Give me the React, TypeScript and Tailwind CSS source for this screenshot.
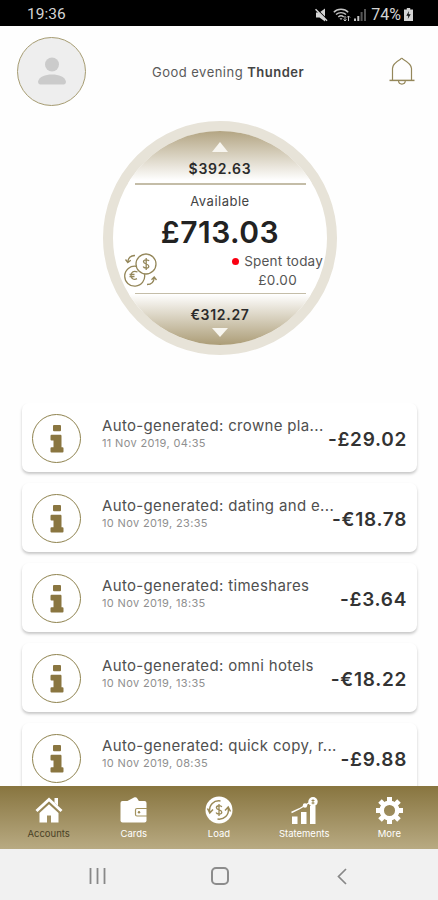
import type { ReactNode } from 'react';

interface Transaction {
  id: number;
  title: string;
  date: string;
  amount: string;
}

const transactions: Transaction[] = [
  { id: 1, title: 'Auto-generated: crowne pla...', date: '11 Nov 2019, 04:35', amount: '-£29.02' },
  { id: 2, title: 'Auto-generated: dating and e...', date: '10 Nov 2019, 23:35', amount: '-€18.78' },
  { id: 3, title: 'Auto-generated: timeshares', date: '10 Nov 2019, 18:35', amount: '-£3.64' },
  { id: 4, title: 'Auto-generated: omni hotels', date: '10 Nov 2019, 13:35', amount: '-€18.22' },
  { id: 5, title: 'Auto-generated: quick copy, r...', date: '10 Nov 2019, 08:35', amount: '-£9.88' },
];

function StatusBar() {
  return (
    <div className="flex h-[26px] shrink-0 items-center justify-between bg-black pl-[27px] pr-[25px] pt-[3px] font-['Roboto',sans-serif] text-[15.5px] text-[#d4d4d4]">
      <span>19:36</span>
      <div className="flex items-center">
        {/* Muted speaker */}
        <svg width="13" height="14" viewBox="0 0 13 14" fill="none" className="mr-[5px]">
          <path d="M1 4.500h3.500L10 .5v13L4.500 9.500H1z" fill="#d4d4d4" />
          <path d="M1.500 .8 13 12.300" stroke="#000" strokeWidth="1.2" />
          <path d="M.5 1.200 12 12.700" stroke="#d4d4d4" strokeWidth="1.600" />
        </svg>
        {/* Wifi */}
        <svg width="18" height="14" viewBox="0 0 18 14" fill="none" stroke="#c4c4c4" strokeWidth="1.4" className="mr-[3px]">
          <path d="M.8 4.200C4.500.2 11.500.2 15.200 4.200" />
          <path d="M3 6.600c2.700-2.600 7.300-2.600 10 0" />
          <path d="M5.300 9c1.500-1.400 3.900-1.400 5.400 0" />
          <path d="M6.500 10.200h3L8 12z" fill="#c4c4c4" stroke="none" />
          <path d="M12 8v5m-1.500-1.500L12 13l1.500-1.500M15.500 13V8M14 9.500 15.500 8 17 9.500" strokeWidth="1" />
        </svg>
        {/* Signal strength */}
        <svg width="12" height="13" viewBox="0 0 12 13" className="mr-[5px]">
          <path d="M0 10.500h2V13H0zM3.300 8h2v5h-2z" fill="#c4c4c4" />
          <path d="M6.600 4h2v9h-2zM10 1h2v12h-2z" fill="#555" />
        </svg>
        <span className="text-[16px]">74%</span>
        <svg width="9" height="13" viewBox="0 0 9 13" className="ml-[3px]">
          <path d="M2.800 0h3.400v1.500H9V13H0V1.500h2.800z" fill="#d4d4d4" />
          <path d="M5 3 2.300 7.700h2L3.800 11l2.900-4.800H4.600z" fill="#111" />
        </svg>
      </div>
    </div>
  );
}

function Header() {
  return (
    <header className="flex h-[90px] shrink-0 items-center pl-[17px]">
      <div className="flex size-[69px] items-center justify-center rounded-full border-[1.5px] border-[#a69c72] bg-[#eeeeee]">
        <svg width="28" height="28" viewBox="0 0 28 28" fill="#cbcbcb">
          <circle cx="14" cy="7.500" r="7" />
          <path d="M0 24.500C1.500 19.500 7 17.500 14 17.500s12.500 2 14 7c0 1.800-1 3-2.500 3h-23C1 27.500 0 26.300 0 24.500z" />
        </svg>
      </div>
      <p className="ml-[66px] w-[237px] pt-[3px] text-[13px] tracking-[0.48px] whitespace-nowrap text-[#5a5a5a]">
        Good evening <span className="font-semibold text-[#444]">Thunder</span>
      </p>
      <svg width="26" height="29" viewBox="0 0 26 29" fill="none" stroke="#94875a" strokeWidth="1.200">
        <path d="M3.500 23V11.500c0-3.500 2.500-6 8-9.200.7-1.400 1.800-1.400 2.500 0 5.500 3.200 8.500 5.700 8.500 9.200V23" />
        <path d="M.5 23.400h25" strokeWidth="1.500" />
        <path d="M9.500 23.800c.3 4.400 6.500 4.400 6.800 0" />
      </svg>
    </header>
  );
}

function ExchangeIcon() {
  return (
    <svg width="34" height="34" viewBox="0 0 34 34" fill="none" stroke="#94875a" strokeWidth="1.300">
      <circle cx="22" cy="11" r="10" />
      <path d="M12.200 13.300A10 10 0 1 0 20.500 21.200" />
      <path d="M25 8c-.5-1.500-5.500-2-5.500.8 0 2.700 5.300 1.700 5.300 4.500 0 2.600-5 2.200-5.600.2M22.200 5v12" />
      <path d="M13.500 19c-4.500-2-6.500 1-6.500 3.500s2.500 5 6 3.200M5.500 21.500h5M5.500 23.700h5" />
      <path d="M11 2.500C6.500 2.500 4 5 3.800 9.500M1.500 6.500l2.300 3 3-2.300" />
      <path d="M23 31.500c4.500 0 7-2.500 7.200-7M27.500 26.800l2.700-2.800 2.300 3" />
    </svg>
  );
}

function BalanceDial() {
  return (
    <section className="mt-[5px] ml-[103px] flex size-[234px] shrink-0 flex-col items-center overflow-hidden rounded-full border-[10px] border-[#e7e3d8] bg-white text-[#2b2b2b]">
      <div className="flex h-[52px] w-full flex-col items-center bg-linear-to-b from-[#b3a583] to-white to-95%">
        <svg width="16" height="10" viewBox="0 0 16 10" className="mt-[11px]">
          <path d="M8 0l8 10H0z" fill="#f7f5ef" />
        </svg>
        <span className="mt-[8px] text-[14px] leading-[17px] font-semibold tracking-[0.75px]">$392.63</span>
      </div>
      <div className="h-[1.500px] w-[171px] shrink-0 bg-[#c4bda8]" />
      <div className="mt-[7px] text-[13px] leading-[18px] tracking-[0.5px] text-[#444]">Available</div>
      <div className="mt-[4px] text-[30px] leading-[36px] font-semibold tracking-[0.5px] text-[#222]">£713.03</div>
      <div className="mt-[2px] flex h-[40px] w-full items-start justify-between pl-[11px] pr-[4px]">
        <div className="pt-px">
          <ExchangeIcon />
        </div>
        <div className="text-[13.5px] leading-[19.500px] tracking-[0.200px] whitespace-nowrap text-[#555]">
          <div className="flex items-center gap-[5px]">
            <span className="size-[7px] rounded-full bg-[#fa0012]" />
            Spent today
          </div>
          <div className="pl-[26px] tracking-[0.400px]">£0.00</div>
        </div>
      </div>
      <div className="mt-px h-[1.500px] w-[171px] shrink-0 bg-[#c4bda8]" />
      <div className="flex w-full flex-1 flex-col items-center bg-linear-to-b from-white to-[#ac9d77]">
        <span className="mt-[12px] text-[14px] leading-[18px] font-semibold tracking-[0.700px]">€312.27</span>
        <svg width="16" height="9" viewBox="0 0 16 9" className="mt-[4px]">
          <path d="M0 0h16L8 9z" fill="#f7f5ef" />
        </svg>
      </div>
    </section>
  );
}

function TransactionCard({ title, date, amount }: Transaction) {
  return (
    <div className="flex h-[69px] shrink-0 rounded-[7px] bg-white pl-[10px] pr-[10px] shadow-[0_2px_3px_rgba(0,0,0,0.22)]">
      <div className="mt-[11px] flex size-[49px] shrink-0 items-center justify-center rounded-full border border-[#8f834f]">
        <svg width="14" height="28" viewBox="0 0 14 27" preserveAspectRatio="none" fill="#8a7640">
          <rect x="3" y="0" width="8" height="6" rx="1" />
          <path d="M1.500 9.500H10.500q1 0 1 1V21.500h1q1 0 1 1V25.500q0 1-1 1H1.500q-1 0-1-1V22.500q0-1 1-1H3.500V15H1.500q-1 0-1-1V10.500q0-1 1-1z" />
        </svg>
      </div>
      <div className="ml-[21px] flex-1 pt-[13px]">
        <div className="w-0 text-[15px] leading-[20px] tracking-[0.340px] whitespace-nowrap text-[#505050]">{title}</div>
        <div className="text-[11px] leading-[15px] tracking-[0.350px] whitespace-nowrap text-[#8f8f8f]">{date}</div>
      </div>
      <div className="pt-[24px] text-[19px] leading-[26px] font-semibold tracking-[0.700px] text-[#333]">{amount}</div>
    </div>
  );
}

function TabItem({ label, active, children }: { label: string; active?: boolean; children: ReactNode }) {
  return (
    <div className="flex flex-1 flex-col items-center pt-[9px]">
      <div className="flex h-[30px] items-center">{children}</div>
      <span className={`mt-[2px] text-[9.500px] leading-[14px] ${active ? 'text-[#4a4226]' : 'text-white'}`}>{label}</span>
    </div>
  );
}

function TabBar() {
  return (
    <nav className="flex h-[63px] shrink-0 bg-linear-to-b from-[#88753f] to-[#b8aa82] px-[6px]">
      <TabItem label="Accounts" active>
        <svg width="28" height="26" viewBox="0 0 28 26" fill="#fff">
          <path d="M1.500 14 14 2.500 26.500 14" fill="none" stroke="#fff" strokeWidth="3" />
          <path d="M19.500 1h3.500v8l-3.500-3.500z" />
          <path d="M4.500 16 14 7.300l9.500 8.700v9.500H16V18.500h-4v7H4.500z" />
        </svg>
      </TabItem>
      <TabItem label="Cards">
        <svg width="27" height="26" viewBox="0 0 27 26" fill="#fff">
          <path d="M5.500 5 14 .5c1.500-.7 2.500-.3 3.300 1L19.500 5z" />
          <path d="M2.500 4h22q2 0 2 2v17.500q0 2-2 2h-22q-2 0-2-2V6q0-2 2-2z" />
          <path d="M27 11.500H17q-1.500 0-1.500 1.500v4.500q0 1.500 1.500 1.500h10" fill="none" stroke="#a4945f" strokeWidth="1.200" />
          <circle cx="19" cy="15.300" r="1.200" fill="#9a8956" />
        </svg>
      </TabItem>
      <TabItem label="Load">
        <svg width="28" height="28" viewBox="0 0 28 28" fill="none" stroke="#9a8956" strokeWidth="1.500">
          <circle cx="14" cy="14" r="13.500" fill="#fff" stroke="none" />
          <path d="M4.800 16C3.500 9 9 4 15.500 5M2.500 12.500 4.800 17l3.200-3.500M23.200 12c1.300 7-4.200 12-10.700 11M25.500 15.500 23.200 11 20 14.500" />
          <path d="M16.800 11c-.8-1.800-5.400-1.800-5.400.7 0 2.600 5.400 1.800 5.400 4.500 0 2.500-5 2.300-5.700.3M14 8v12" strokeWidth="1.300" />
        </svg>
      </TabItem>
      <TabItem label="Statements">
        <svg width="27" height="27" viewBox="0 0 27 27" fill="#fff">
          <path d="M1 19.500h5.500V27H1zM10 15h5.500v12H10zM19 9h5.500v18H19z" />
          <path d="M.5 15.500 8 12l6-3.500 6-4" fill="none" stroke="#fff" strokeWidth="1.400" />
          <circle cx="14" cy="8.500" r="2.200" />
          <circle cx="22" cy="4.800" r="4.700" />
          <path d="M22 2.300v5M20.500 3.500h3M20.500 6h3" stroke="#9a8956" strokeWidth="1" />
        </svg>
      </TabItem>
      <TabItem label="More">
        <svg width="27" height="27" viewBox="0 0 27 27" fill="none" stroke="#fff">
          <circle cx="13.500" cy="13.500" r="7.800" strokeWidth="4.500" />
          <g strokeWidth="5">
            <path d="M13.500 0v5M13.500 22v5M0 13.500h5M22 13.500h5" />
            <path d="m4 4 3.500 3.500M19.500 19.500 23 23M4 23l3.500-3.500M19.500 7.500 23 4" />
          </g>
        </svg>
      </TabItem>
    </nav>
  );
}

function SystemNav() {
  return (
    <div className="flex h-[51px] shrink-0 items-center bg-[#f1f1f1] pt-[3px] pl-[89px]">
      <svg width="17" height="16" viewBox="0 0 17 16" stroke="#888" strokeWidth="1.800">
        <path d="M1.500 0v16M8.500 0v16M15.500 0v16" />
      </svg>
      <div className="ml-[105px] size-[18px] rounded-[5px] border-2 border-[#8c8c8c]" />
      <svg width="10" height="17" viewBox="0 0 10 17" fill="none" stroke="#888" strokeWidth="1.700" className="ml-[108px]">
        <path d="M9 1 1.500 8.500 9 16" />
      </svg>
    </div>
  );
}

export default function App() {
  return (
    <div className="flex h-[900px] w-[438px] flex-col overflow-hidden bg-[#fefefe] font-['Inter',sans-serif]">
      <StatusBar />
      <Header />
      <BalanceDial />
      <main className="mt-[48px] flex min-h-0 flex-1 flex-col gap-[11px] overflow-hidden pl-[22px] pr-[21px]">
        {transactions.map((item) => (
          <TransactionCard key={item.id} {...item} />
        ))}
      </main>
      <TabBar />
      <SystemNav />
    </div>
  );
}
